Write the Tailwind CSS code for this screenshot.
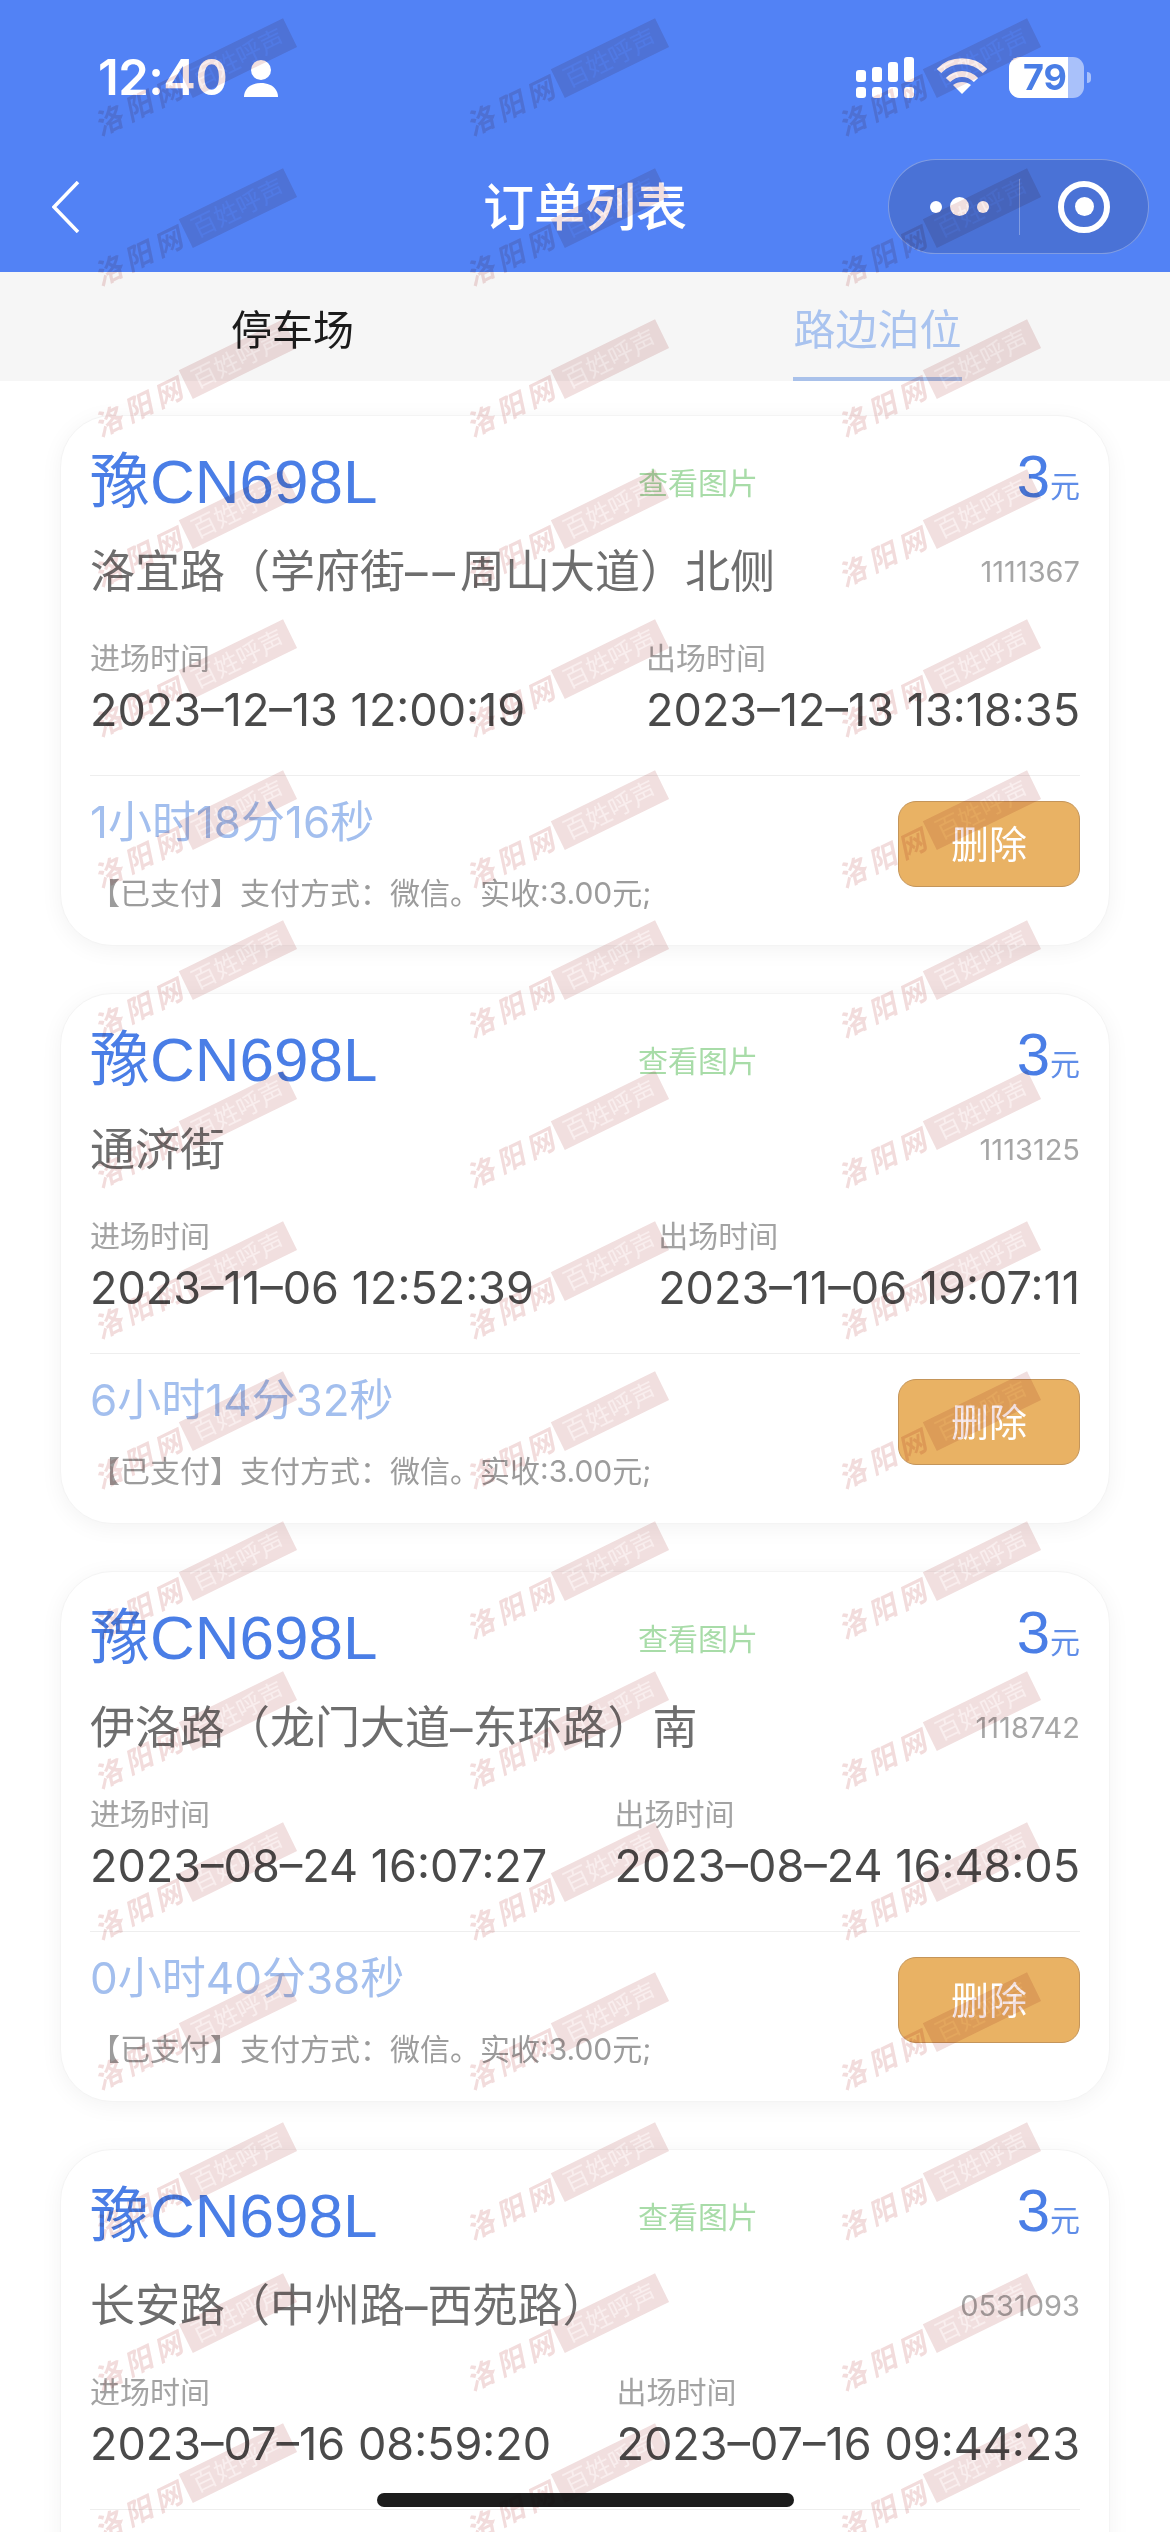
<!DOCTYPE html>
<html lang="zh-CN">
<head>
<meta charset="utf-8">
<script src="https://cdn.jsdelivr.net/npm/@tailwindcss/browser@4"></script>
<title>订单列表</title>
</head>
<body class="bg-white">
<div class="relative w-[1170px] h-[2532px] overflow-hidden bg-white font-['Inter','Noto_Sans_CJK_SC',sans-serif]">

  <!-- header -->
  <header class="h-[272px] bg-[#5282f5] text-white flex flex-col">
    <div class="h-[159px] pl-[98px] pr-[79px] flex items-start justify-between">
      <div class="flex items-center gap-[17px] mt-[52px] h-[52px]">
        <span class="font-semibold text-[49px] leading-[52px] tracking-[-0.5px]">12:40</span>
        <svg width="34" height="37" viewBox="0 0 34 37" fill="white"><circle cx="17" cy="10" r="10"/><path d="M0 37c0-1 0-4 2-7 3-5 9-7 15-7s12 2 15 7c2 3 2 6 2 7z"/></svg>
      </div>
      <div class="flex items-center mt-[57px] h-[41px] gap-[26px]">
        <svg width="58" height="41" viewBox="0 0 58 41" fill="white">
          <rect x="0" y="13" width="10" height="12" rx="3"/><rect x="16" y="10" width="10" height="15" rx="3"/><rect x="32" y="5" width="10" height="20" rx="3"/><rect x="48" y="0" width="10" height="25" rx="3"/>
          <rect x="0" y="30" width="10" height="11" rx="3"/><rect x="16" y="30" width="10" height="11" rx="3"/><rect x="32" y="30" width="10" height="11" rx="3"/><rect x="48" y="30" width="10" height="11" rx="3"/>
        </svg>
        <svg width="50" height="37" viewBox="0 0 50 37" fill="none" stroke="white" stroke-width="6" class="ml-[-3px] mt-[-4px]">
          <path d="M2 14C14 1 36 1 48 14"/><path d="M11 23c8-8 20-8 28 0"/><path d="M25 37l-9-9c5-4 13-4 18 0z" fill="white" stroke="none"/>
        </svg>
        <div class="flex items-center gap-[3px] ml-[-4px]">
          <div class="relative w-[75px] h-[41px] rounded-[11px] bg-white/50 overflow-hidden">
            <div class="absolute left-0 top-0 bottom-0 w-[59px] bg-white"></div>
            <span class="absolute left-0 top-0 w-[72px] text-center font-bold text-[36px] leading-[41px] text-[#4a7ee6]">79</span>
          </div>
          <div class="w-[4px] h-[11px] rounded-r-full bg-white/50"></div>
        </div>
      </div>
    </div>
    <div class="relative h-[95px] pl-[52px] pr-[21px] flex items-center justify-between">
      <svg width="28" height="52" viewBox="0 0 28 52" fill="none" stroke="white" stroke-width="3.5"><path d="M26 1L2 26l24 25"/></svg>
      <h1 class="absolute left-0 right-0 top-[20px] text-center text-[51px] leading-[58px] font-medium">订单列表</h1>
      <div class="w-[261px] h-[95px] rounded-full bg-[#4a72d6] border border-white/30 flex items-center">
        <div class="w-[130px] flex items-center justify-center gap-[8px] pl-[10px]">
          <span class="w-[12px] h-[12px] rounded-full bg-white"></span>
          <span class="w-[19px] h-[19px] rounded-full bg-white"></span>
          <span class="w-[12px] h-[12px] rounded-full bg-white"></span>
        </div>
        <div class="w-px h-[56px] bg-white/30"></div>
        <div class="flex-1 flex items-center justify-center">
          <div class="w-[52px] h-[52px] rounded-full border-[6px] border-white flex items-center justify-center">
            <span class="w-[19px] h-[19px] rounded-full bg-white"></span>
          </div>
        </div>
      </div>
    </div>
  </header>

  <!-- tabs -->
  <nav class="h-[109px] bg-[#f6f6f6] grid grid-cols-2 text-center">
    <div class="flex justify-center"><span class="h-[109px] leading-[116px] text-[41px] text-[#1c1c1c]">停车场</span></div>
    <div class="flex justify-center"><span class="h-[109px] leading-[116px] text-[42px] text-[#a9c3ef] border-b-[4px] border-[#a9c1ea]">路边泊位</span></div>
  </nav>

  <!-- list -->
  <main class="px-[60px] pt-[34px] flex flex-col gap-[47px]">

    <article class="h-[531px] shrink-0 rounded-[52px] bg-white border border-[#f4f4f4] shadow-[0_4px_22px_rgba(0,0,0,0.05)] px-[29px] pt-[30px]">
      <div class="h-[71px] flex items-center relative">
        <span class="text-[60px] leading-[71px] text-[#4a7ee6]">豫<span class="font-['Liberation_Sans',sans-serif] text-[62px]">CN698L</span></span>
        <span class="absolute left-[548px] top-[17px] text-[30px] leading-[40px] text-[#a8dca8]">查看图片</span>
        <span class="ml-auto text-[#4a7ee6] text-[60px] leading-[71px] font-['Liberation_Sans','Noto_Sans_CJK_SC',sans-serif]">3<span class="text-[30px] text-[#5f8de8]">元</span></span>
      </div>
      <div class="h-[50px] mt-[30px] flex items-center justify-between">
        <span class="text-[45px] leading-[50px] text-[#6e6e6e]">洛宜路（学府街<span class="tracking-[5px]">––</span>周山大道）北侧</span>
        <span class="text-[29px] text-[#a6a6a6]">1111367</span>
      </div>
      <div class="mt-[43px] flex justify-between">
        <div><div class="h-[36px] text-[30px] leading-[36px] text-[#a3a3a3]">进场时间</div><div class="h-[54px] mt-[7px] text-[45px] leading-[54px] text-[#4a4a4a]">2023–12–13 12:00:19</div></div>
        <div><div class="h-[36px] text-[30px] leading-[36px] text-[#a3a3a3]">出场时间</div><div class="h-[54px] mt-[7px] text-[45px] leading-[54px] text-[#4a4a4a]">2023–12–13 13:18:35</div></div>
      </div>
      <div class="h-px mt-[38px] bg-[#eeeeee]"></div>
      <div class="flex justify-between">
        <div>
          <div class="h-[50px] mt-[21px] text-[44px] leading-[50px] text-[#a3bfee]">1小时18分16秒</div>
          <div class="h-[40px] mt-[26px] text-[30px] leading-[40px] text-[#9c9c9c]">【已支付】支付方式：微信。实收:3.00元;</div>
        </div>
        <button class="w-[182px] h-[86px] mt-[25px] rounded-[18px] bg-[#e9b264] border border-[#c4955a] text-white text-[38px]">删除</button>
      </div>
    </article>

    <article class="h-[531px] shrink-0 rounded-[52px] bg-white border border-[#f4f4f4] shadow-[0_4px_22px_rgba(0,0,0,0.05)] px-[29px] pt-[30px]">
      <div class="h-[71px] flex items-center relative">
        <span class="text-[60px] leading-[71px] text-[#4a7ee6]">豫<span class="font-['Liberation_Sans',sans-serif] text-[62px]">CN698L</span></span>
        <span class="absolute left-[548px] top-[17px] text-[30px] leading-[40px] text-[#a8dca8]">查看图片</span>
        <span class="ml-auto text-[#4a7ee6] text-[60px] leading-[71px] font-['Liberation_Sans','Noto_Sans_CJK_SC',sans-serif]">3<span class="text-[30px] text-[#5f8de8]">元</span></span>
      </div>
      <div class="h-[50px] mt-[30px] flex items-center justify-between">
        <span class="text-[45px] leading-[50px] text-[#6e6e6e]">通济街</span>
        <span class="text-[29px] text-[#a6a6a6]">1113125</span>
      </div>
      <div class="mt-[43px] flex justify-between">
        <div><div class="h-[36px] text-[30px] leading-[36px] text-[#a3a3a3]">进场时间</div><div class="h-[54px] mt-[7px] text-[45px] leading-[54px] text-[#4a4a4a]">2023–11–06 12:52:39</div></div>
        <div><div class="h-[36px] text-[30px] leading-[36px] text-[#a3a3a3]">出场时间</div><div class="h-[54px] mt-[7px] text-[45px] leading-[54px] text-[#4a4a4a]">2023–11–06 19:07:11</div></div>
      </div>
      <div class="h-px mt-[38px] bg-[#eeeeee]"></div>
      <div class="flex justify-between">
        <div>
          <div class="h-[50px] mt-[21px] text-[44px] leading-[50px] text-[#a3bfee]">6小时14分32秒</div>
          <div class="h-[40px] mt-[26px] text-[30px] leading-[40px] text-[#9c9c9c]">【已支付】支付方式：微信。实收:3.00元;</div>
        </div>
        <button class="w-[182px] h-[86px] mt-[25px] rounded-[18px] bg-[#e9b264] border border-[#c4955a] text-white text-[38px]">删除</button>
      </div>
    </article>

    <article class="h-[531px] shrink-0 rounded-[52px] bg-white border border-[#f4f4f4] shadow-[0_4px_22px_rgba(0,0,0,0.05)] px-[29px] pt-[30px]">
      <div class="h-[71px] flex items-center relative">
        <span class="text-[60px] leading-[71px] text-[#4a7ee6]">豫<span class="font-['Liberation_Sans',sans-serif] text-[62px]">CN698L</span></span>
        <span class="absolute left-[548px] top-[17px] text-[30px] leading-[40px] text-[#a8dca8]">查看图片</span>
        <span class="ml-auto text-[#4a7ee6] text-[60px] leading-[71px] font-['Liberation_Sans','Noto_Sans_CJK_SC',sans-serif]">3<span class="text-[30px] text-[#5f8de8]">元</span></span>
      </div>
      <div class="h-[50px] mt-[30px] flex items-center justify-between">
        <span class="text-[45px] leading-[50px] text-[#6e6e6e]">伊洛路（龙门大道–东环路）南</span>
        <span class="text-[29px] text-[#a6a6a6]">1118742</span>
      </div>
      <div class="mt-[43px] flex justify-between">
        <div><div class="h-[36px] text-[30px] leading-[36px] text-[#a3a3a3]">进场时间</div><div class="h-[54px] mt-[7px] text-[45px] leading-[54px] text-[#4a4a4a]">2023–08–24 16:07:27</div></div>
        <div><div class="h-[36px] text-[30px] leading-[36px] text-[#a3a3a3]">出场时间</div><div class="h-[54px] mt-[7px] text-[45px] leading-[54px] text-[#4a4a4a]">2023–08–24 16:48:05</div></div>
      </div>
      <div class="h-px mt-[38px] bg-[#eeeeee]"></div>
      <div class="flex justify-between">
        <div>
          <div class="h-[50px] mt-[21px] text-[44px] leading-[50px] text-[#a3bfee]">0小时40分38秒</div>
          <div class="h-[40px] mt-[26px] text-[30px] leading-[40px] text-[#9c9c9c]">【已支付】支付方式：微信。实收:3.00元;</div>
        </div>
        <button class="w-[182px] h-[86px] mt-[25px] rounded-[18px] bg-[#e9b264] border border-[#c4955a] text-white text-[38px]">删除</button>
      </div>
    </article>

    <article class="h-[531px] shrink-0 rounded-[52px] bg-white border border-[#f4f4f4] shadow-[0_4px_22px_rgba(0,0,0,0.05)] px-[29px] pt-[30px]">
      <div class="h-[71px] flex items-center relative">
        <span class="text-[60px] leading-[71px] text-[#4a7ee6]">豫<span class="font-['Liberation_Sans',sans-serif] text-[62px]">CN698L</span></span>
        <span class="absolute left-[548px] top-[17px] text-[30px] leading-[40px] text-[#a8dca8]">查看图片</span>
        <span class="ml-auto text-[#4a7ee6] text-[60px] leading-[71px] font-['Liberation_Sans','Noto_Sans_CJK_SC',sans-serif]">3<span class="text-[30px] text-[#5f8de8]">元</span></span>
      </div>
      <div class="h-[50px] mt-[30px] flex items-center justify-between">
        <span class="text-[45px] leading-[50px] text-[#6e6e6e]">长安路（中州路–西苑路）</span>
        <span class="text-[29px] text-[#a6a6a6]">0531093</span>
      </div>
      <div class="mt-[43px] flex justify-between">
        <div><div class="h-[36px] text-[30px] leading-[36px] text-[#a3a3a3]">进场时间</div><div class="h-[54px] mt-[7px] text-[45px] leading-[54px] text-[#4a4a4a]">2023–07–16 08:59:20</div></div>
        <div><div class="h-[36px] text-[30px] leading-[36px] text-[#a3a3a3]">出场时间</div><div class="h-[54px] mt-[7px] text-[45px] leading-[54px] text-[#4a4a4a]">2023–07–16 09:44:23</div></div>
      </div>
      <div class="h-px mt-[38px] bg-[#eeeeee]"></div>
    </article>
  </main>

  <!-- home indicator -->
  <div class="absolute left-[377px] bottom-[25px] w-[417px] h-[14px] rounded-full bg-[#1c1c1c]"></div>

  <!-- watermark -->
  <div id="wm" class="absolute inset-0 pointer-events-none mix-blend-multiply pl-[7px] pt-[5px] grid grid-cols-[repeat(3,372px)] auto-rows-[150.3px]"></div>
  <script>
    var cell = '<div class="flex items-center justify-center"><div class="flex items-center rotate-[-26deg]"><span class="w-[100px] text-[28px] leading-[32px] italic font-bold tracking-[5px] text-[#f2dcdc] whitespace-nowrap">洛阳网</span><span class="w-[116px] h-[32px] bg-[#f1dfdf] text-[#f9eeee] text-[25px] leading-[32px] text-center whitespace-nowrap">百姓呼声</span></div></div>';
    document.getElementById('wm').innerHTML = new Array(54).join('x').split('x').map(function () { return cell; }).join('');
  </script>
</div>
</body>
</html>
